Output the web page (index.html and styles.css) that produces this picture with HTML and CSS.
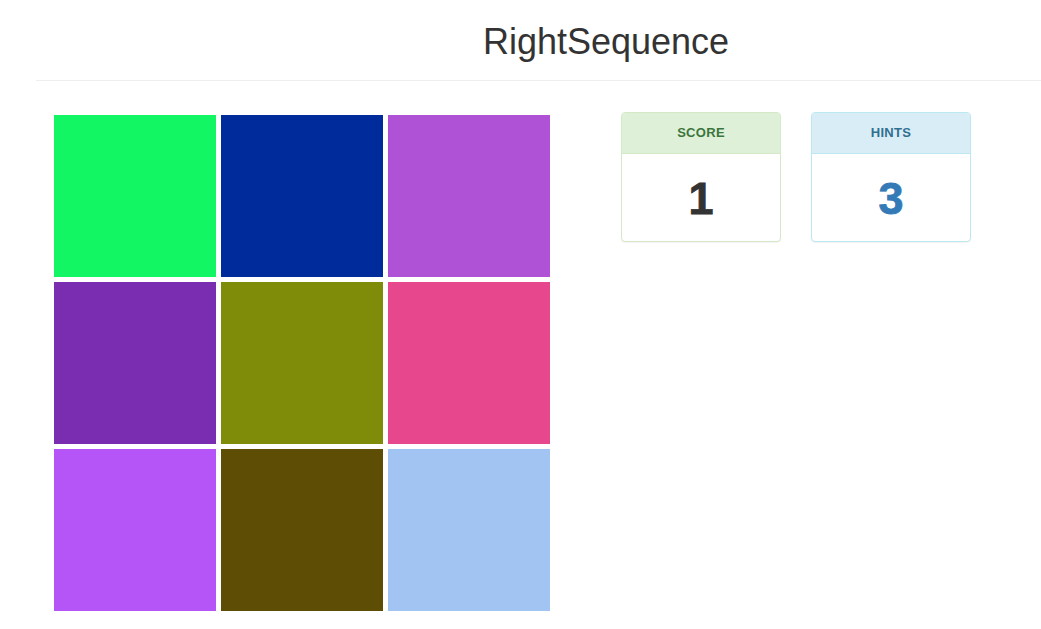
FILE: index.html
```html
<!DOCTYPE html>
<html>
<head>
<meta charset="utf-8">
<title>RightSequence</title>
<link rel="stylesheet" href="styles.css">
</head>
<body>
<header class="page-header">
  <h1 class="title">RightSequence</h1>
</header>
<main class="main">
  <div class="board">
    <div class="cell c1"></div>
    <div class="cell c2"></div>
    <div class="cell c3"></div>
    <div class="cell c4"></div>
    <div class="cell c5"></div>
    <div class="cell c6"></div>
    <div class="cell c7"></div>
    <div class="cell c8"></div>
    <div class="cell c9"></div>
  </div>
  <div class="stats">
    <div class="panel panel-score">
      <div class="panel-heading">Score</div>
      <div class="panel-body">1</div>
    </div>
    <div class="panel panel-hints">
      <div class="panel-heading">Hints</div>
      <div class="panel-body">3</div>
    </div>
  </div>
</main>
</body>
</html>
```
FILE: styles.css
```css
html, body {
  margin: 0;
  padding: 0;
  background: #fff;
  font-family: "Liberation Sans", Arial, Helvetica, sans-serif;
  color: #333;
}

.page-header {
  margin-left: 36px;
  padding-left: 135px;
  padding-bottom: 18px;
  border-bottom: 1px solid #eeeeee;
}

.title {
  margin: 22px 0 0;
  font-size: 36px;
  font-weight: 500;
  line-height: 1.1;
  text-align: center;
  color: #333;
}

.main {
  display: flex;
  align-items: flex-start;
  gap: 71px;
  padding: 31px 0 0 54px;
}

.board {
  margin-top: 3px;
  display: grid;
  grid-template-columns: repeat(3, 162px);
  grid-template-rows: repeat(3, 162px);
  gap: 5px;
}

.c1 { background: #12f664; }
.c2 { background: #002b9a; }
.c3 { background: #b052d5; }
.c4 { background: #7a2db0; }
.c5 { background: #7f8c0a; }
.c6 { background: #e6478d; }
.c7 { background: #b655f7; }
.c8 { background: #5e4d05; }
.c9 { background: #a2c4f2; }

.stats {
  display: flex;
  gap: 30px;
}

.panel {
  width: 160px;
  box-sizing: border-box;
  border: 1px solid;
  border-radius: 4px;
  overflow: hidden;
  background: #fff;
  box-shadow: 0 1px 1px rgba(0,0,0,0.05);
}

.panel-heading {
  height: 41px;
  box-sizing: border-box;
  border-bottom: 1px solid;
  display: flex;
  align-items: center;
  justify-content: center;
  font-size: 13px;
  font-weight: bold;
  text-transform: uppercase;
  letter-spacing: 0.3px;
}

.panel-body {
  height: 87px;
  box-sizing: border-box;
  padding-top: 4px;
  display: flex;
  align-items: center;
  justify-content: center;
  font-size: 45px;
  font-weight: bold;
  -webkit-text-stroke: 0.8px currentColor;
}

.panel-score { border-color: #d6e9c6; }
.panel-score .panel-heading {
  background: #dff0d8;
  border-color: #d6e9c6;
  color: #3c763d;
}
.panel-score .panel-body { color: #333; }

.panel-hints { border-color: #bce8f1; }
.panel-hints .panel-heading {
  background: #d9edf7;
  border-color: #bce8f1;
  color: #31708f;
}
.panel-hints .panel-body { color: #337ab7; }
```
